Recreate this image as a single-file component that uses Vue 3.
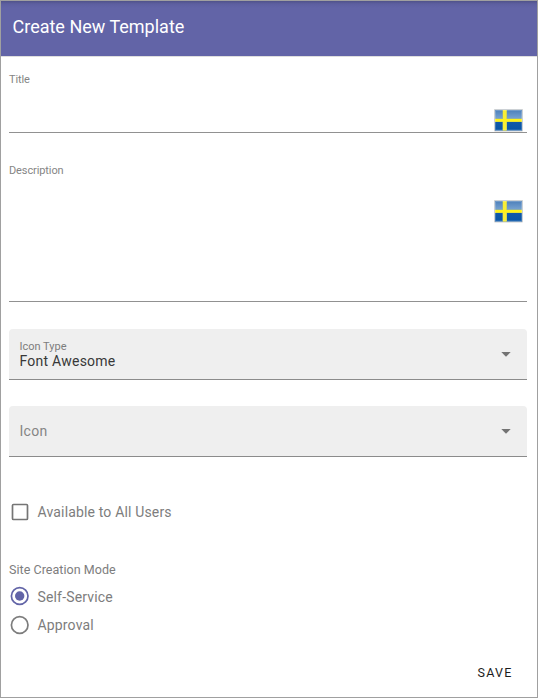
<script setup>
import { ref } from 'vue'

const textFields = [
  { label: 'Title', kind: 'single' },
  { label: 'Description', kind: 'multi' },
]
const selects = [
  { label: 'Icon Type', value: 'Font Awesome' },
  { label: 'Icon', value: '' },
]
const modes = ['Self-Service', 'Approval']
const mode = ref('Self-Service')
const allUsers = ref(false)
</script>

<template>
  <main class="dialog">
    <header class="toolbar"><h1>Create New Template</h1></header>
    <form class="form" @submit.prevent>
      <section v-for="field in textFields" :key="field.label" class="field" :class="field.kind">
        <span class="field-label">{{ field.label }}</span>
        <svg class="flag" width="31" height="24" viewBox="0 0 31 24" aria-label="Swedish">
          <defs>
            <linearGradient :id="'blue-' + field.kind" x1="0" y1="0" x2="0" y2="1">
              <stop offset="0" stop-color="#4d80ba" />
              <stop offset=".46" stop-color="#7ba6d3" />
              <stop offset=".5" stop-color="#1459a7" />
              <stop offset="1" stop-color="#0755a8" />
            </linearGradient>
          </defs>
          <rect x="1" y="1" width="29" height="22.5" rx="1" fill="#000" opacity=".2" />
          <rect x="1.5" y="1.5" width="28" height="21" rx=".5" fill="#cbd5de" />
          <rect x="2" y="2" width="27" height="20.5" :fill="`url(#blue-${field.kind})`" />
          <path d="M9.5 2h4.5v20.5H9.5zM2 10.5h27v3.5H2z" fill="#a9bd74" />
          <path d="M10 2h3.5v20.5H10z" fill="#f8ee35" />
          <path d="M2 11h27v2.7H2z" fill="#fff21a" />
          <path d="M2.5 2.5h26v19.5h-26z" fill="none" stroke="#fff" stroke-opacity=".2" />
        </svg>
      </section>

      <div class="selects">
        <div v-for="select in selects" :key="select.label" class="select">
          <div class="select-text">
            <span :class="select.value ? 'select-caption' : 'select-placeholder'">{{ select.label }}</span>
            <span v-if="select.value" class="select-value">{{ select.value }}</span>
          </div>
          <svg class="arrow" width="10" height="5" viewBox="0 0 10 5"><path d="M.3 0h9.4L5 4.7z" fill="#737373" /></svg>
        </div>
      </div>

      <div class="option available" @click="allUsers = !allUsers">
        <svg width="22" height="22" viewBox="0 0 22 22">
          <rect x="3.5" y="3.5" width="15" height="15" rx="1" fill="none" stroke="#757575" stroke-width="1.7" />
          <path v-if="allUsers" d="M6 11l4 4 7-8" fill="none" stroke="#6264a7" stroke-width="2" />
        </svg>
        <span>Available to All Users</span>
      </div>

      <div class="legend">Site Creation Mode</div>
      <div v-for="item in modes" :key="item" class="option radio" @click="mode = item">
        <svg width="22" height="22" viewBox="0 0 22 22" :class="{ active: mode === item }">
          <circle cx="10.7" cy="11" r="8.3" fill="none" stroke="currentColor" stroke-width="1.7" />
          <circle v-if="mode === item" cx="10.7" cy="11" r="4.7" fill="currentColor" />
        </svg>
        <span>{{ item }}</span>
      </div>
    </form>
    <footer class="actions"><button type="button">SAVE</button></footer>
  </main>
</template>

<style>
body { background: #fff; }
</style>

<style scoped>
.dialog {
  box-sizing: border-box;
  width: 538px;
  height: 698px;
  border: 1px solid #a0a0a0;
  display: flex;
  flex-direction: column;
  font-family: Roboto, sans-serif;
  font-weight: 400;
  color: #7d7d7d;
  background: #fff;
}
.toolbar {
  box-sizing: border-box;
  height: 56px;
  padding: 0 11.5px;
  display: flex;
  align-items: center;
  background: linear-gradient(#50528a 0, #5d5fa0 3px, #6264a7 7px);
  border-bottom: 1px solid #dedede;
}
h1 {
  margin: 0;
  padding-bottom: 3px;
  font-size: 18px;
  line-height: 24px;
  font-weight: 400;
  letter-spacing: 0;
  color: #fff;
}
.form {
  flex: 1;
  padding: 0 10px 0 8px;
}
.field {
  box-sizing: border-box;
  display: flex;
  justify-content: space-between;
  align-items: flex-start;
  border-bottom: 1px solid #919191;
}
.single { height: 76px; padding-top: 16px; }
.multi { height: 169px; padding-top: 31px; }
.field-label {
  font-size: 11px;
  line-height: 14px;
  letter-spacing: -.1px;
  color: #858585;
}
.flag {
  margin: 35px 3px 0 0;
  flex: none;
}
.selects {
  display: grid;
  gap: 26px;
  margin-top: 27px;
}
.select {
  box-sizing: border-box;
  height: 51px;
  padding: 0 16px 0 10.5px;
  display: flex;
  align-items: center;
  justify-content: space-between;
  background: #efefef;
  border-bottom: 1px solid #8b8b8b;
  border-radius: 4px 4px 0 0;
}
.select-text {
  display: flex;
  flex-direction: column;
}
.select-caption {
  padding-top: 1px;
  font-size: 11px;
  line-height: 13px;
  letter-spacing: 0;
}
.select-value {
  font-size: 14px;
  line-height: 16px;
  letter-spacing: .24px;
  color: #383838;
}
.select-placeholder {
  font-size: 14px;
  line-height: 20px;
  letter-spacing: .3px;
  color: #858585;
}
.option {
  display: flex;
  align-items: center;
  gap: 6.5px;
  height: 29px;
  font-size: 14px;
  letter-spacing: .16px;
}
.available { margin-top: 40px; }
.legend {
  margin-top: 35px;
  margin-bottom: 3px;
  font-size: 12.5px;
  line-height: 17px;
  letter-spacing: .04px;
}
.active { color: #6264a7; }
.radio:has(.active) span { padding-top: 2px; }
.actions {
  display: flex;
  justify-content: flex-end;
  padding: 0 24.5px 14px 0;
}
button {
  padding: 0;
  border: 0;
  background: none;
  font: 400 12.5px/20px Roboto, sans-serif;
  letter-spacing: 1.2px;
  color: #1c1c1c;
}
</style>
